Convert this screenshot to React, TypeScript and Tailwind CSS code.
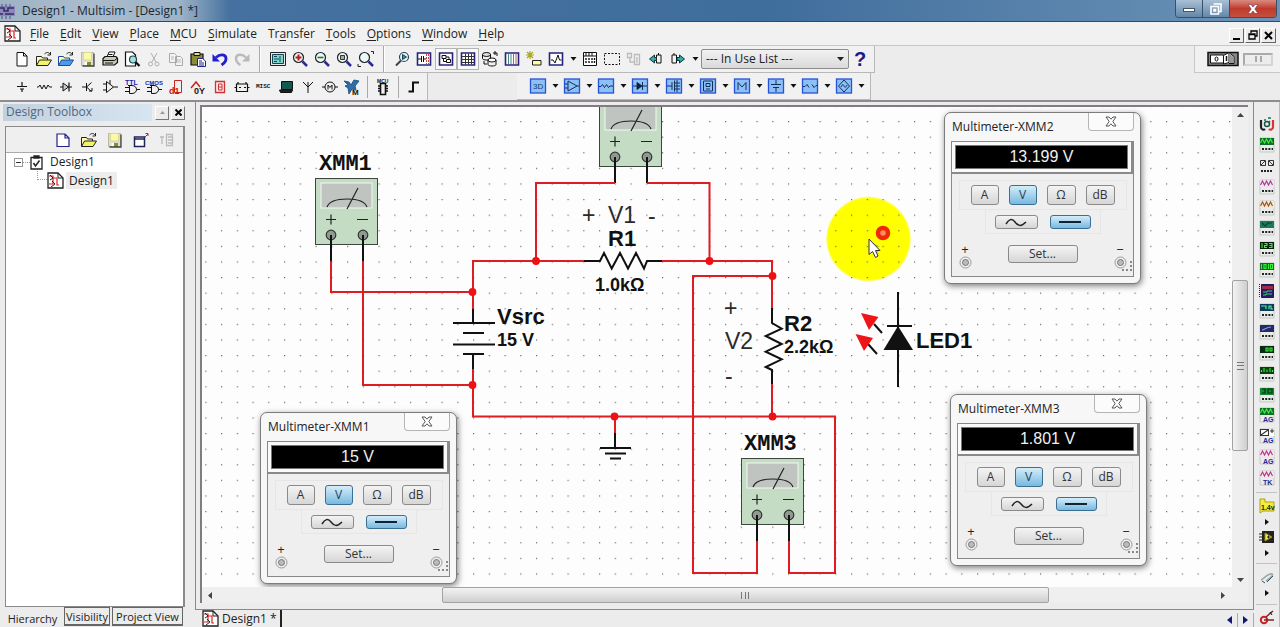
import React from "react";

type Kids = { children?: React.ReactNode };

/* ---------- shared pieces ---------- */

function Glyph({ children, size = 18 }: Kids & { size?: number }) {
  return (
    <svg width={size} height={size} viewBox="0 0 18 18" fill="none" stroke="#111" strokeWidth="1" aria-hidden="true" className="shrink-0">
      {children}
    </svg>
  );
}

function ToolButton({ label, children, pressed }: Kids & { label: string; pressed?: boolean }) {
  return (
    <button
      type="button"
      aria-label={label}
      className={
        pressed
          ? "flex h-[22px] w-[22px] shrink-0 items-center justify-center border border-[#b4b4b4] bg-[#f8f8f8]"
          : "flex h-[22px] w-[22px] shrink-0 items-center justify-center"
      }
    >
      {children}
    </button>
  );
}

function Separator() {
  return <span className="mx-[6px] h-[26px] w-[2px] shrink-0 border-l border-[#a8a8a8] bg-white" />;
}

function Caret({ label }: { label: string }) {
  return (
    <button type="button" aria-label={label} className="flex h-[22px] w-[12px] shrink-0 items-center justify-center">
      <svg width="7" height="4" viewBox="0 0 7 4" aria-hidden="true">
        <path d="M0.500 0h6L3.500 3.800z" fill="#111" />
      </svg>
    </button>
  );
}

function SheetIcon() {
  return (
    <svg width="17" height="17" viewBox="0 0 17 17" fill="none" aria-hidden="true" className="shrink-0">
      <path d="M1 1h10l5 5v10H1z" fill="#fff" stroke="#222" strokeWidth="1.300" />
      <path d="M11 1v5h5" stroke="#222" />
      <path d="M2 4h4v8H2M6 6h4v7h2" stroke="#d22" strokeWidth="1.200" />
      <path d="M3 3l3 3-3 2M4 15l4-3-3-3" stroke="#222" />
    </svg>
  );
}

/* ---------- standard toolbar drawings ---------- */

const pageShape = <path d="M4 2.500h6.500l3.500 3.500v10H4zM10.500 2.500V6H14" fill="#fff" stroke="#111" />;

function FolderGlyph({ fill, line }: { fill: string; line: string }) {
  return (
    <Glyph>
      <path d="M1.500 15.500v-9h5l1 1.500h5v2" fill="#ffffb0" stroke={line} />
      <path d="M1.500 15.500L4.500 10h12l-3.500 5.500z" fill={fill} stroke={line} />
      <path d="M9.500 4c2-2 4-2 5.500 0M15.500 2v3h-3" stroke="#222" />
    </Glyph>
  );
}

function SaveGlyph() {
  return (
    <Glyph>
      <path d="M2.500 2.500h12v13h-12z" fill="#deded0" stroke="#b8b8a8" />
      <path d="M4.500 2.500h8v7.500h-8z" fill="#fafaa8" stroke="#d8d890" />
      <path d="M5.500 12h2.500v3.500H5.500z" fill="#fff" stroke="none" />
      <path d="M8 12h4v4H8z" fill="#8a8a30" stroke="none" />
      <path d="M15 3.500v12.500H3.500" stroke="#444" strokeWidth="1.300" />
    </Glyph>
  );
}

function Lens({ children }: Kids) {
  return (
    <Glyph>
      <circle cx="7.500" cy="7.500" r="5" fill="#eafafa" stroke="#222" strokeWidth="1.200" />
      <path d="M11.500 11.500l4.500 4.500" stroke="#2a2a90" strokeWidth="2.500" />
      {children}
    </Glyph>
  );
}

const fileTools: [string, React.ReactNode][] = [
  ["New", <Glyph key="g">{pageShape}</Glyph>],
  ["Open", <FolderGlyph key="g" fill="#f5f36a" line="#222" />],
  ["Open samples", <FolderGlyph key="g" fill="#4a9bf0" line="#1a4a9a" />],
  ["Save", <SaveGlyph key="g" />],
  [
    "Print",
    <Glyph key="g">
      <path d="M6 7l2-5h6l-2 5" fill="#fff" />
      <path d="M2 8.500l2-2h11l1.500 2v4l-3 2.500H2z" fill="#c9c9b0" strokeWidth="1.200" />
      <path d="M2 10.500h11.500l3-2.500M4 13h8M7.500 4.500h4" />
    </Glyph>,
  ],
  [
    "Print preview",
    <Glyph key="g">
      <path d="M2.500 2h7l3 3v11h-10z" fill="#fff" strokeWidth="1.200" />
      <circle cx="10" cy="9.500" r="3.500" fill="#9fe0e0" stroke="#244" strokeWidth="1.200" />
      <path d="M12.500 12l4 4" strokeWidth="2.300" />
    </Glyph>,
  ],
  [
    "Cut",
    <Glyph key="g">
      <path d="M6 3l5 9M12 3l-5 9" stroke="#b0b0b0" />
      <circle cx="5.500" cy="14" r="2" stroke="#b0b0b0" />
      <circle cx="12" cy="14" r="2" stroke="#b0b0b0" />
    </Glyph>,
  ],
  [
    "Copy",
    <Glyph key="g">
      <path d="M2.500 3.500h5l2 2v7h-7zM8.500 6.500h5l2 2v7h-7z" fill="#f3f3f3" stroke="#aaa" />
      <path d="M4 7h3M4 9h3M10 10h4M10 12h4" stroke="#bbb" />
    </Glyph>,
  ],
  [
    "Paste",
    <Glyph key="g">
      <path d="M2 4h12v11H2z" fill="#8b8b3c" strokeWidth="1.200" />
      <path d="M5 2.500h6v3H5z" fill="#dcdc80" />
      <path d="M8.500 8.500h5l3 2.500v5.500h-8z" fill="#fff" stroke="#23238a" />
      <path d="M10 11h3M10 13h5M10 15h5" stroke="#23238a" />
    </Glyph>,
  ],
  [
    "Undo",
    <Glyph key="g">
      <path d="M5 7.500C9 3.500 15 4 15 8.500c0 3-2 5-4.500 6.500" stroke="#2020d0" strokeWidth="2.800" />
      <path d="M1.500 4v7.500H9z" fill="#2020d0" stroke="none" />
    </Glyph>,
  ],
  [
    "Redo",
    <Glyph key="g">
      <path d="M13 7.500C9 3.500 3 4 3 8.500c0 3 2 5 4.500 6.500" stroke="#b9b9b9" strokeWidth="2.400" />
      <path d="M16.500 4v7.500H9z" fill="#b9b9b9" stroke="none" />
    </Glyph>,
  ],
];

const zoomTools: [string, React.ReactNode][] = [
  [
    "Full screen",
    <Glyph key="g">
      <path d="M1.500 2.500h15v13h-15z" fill="#e8e8e8" stroke="#222" />
      <path d="M3.500 4.500h11v9h-11z" fill="#7fd6c8" stroke="#145" />
      <path d="M5 6.500h3M5 9h5M5 11.500h3M11 6v6" stroke="#145" />
    </Glyph>,
  ],
  ["Zoom in", <Lens key="g"><path d="M4.500 7.500h6M7.500 4.500v6" stroke="#c01818" strokeWidth="2" /></Lens>],
  ["Zoom out", <Lens key="g"><path d="M4.500 7.500h6" stroke="#188018" strokeWidth="1.600" /></Lens>],
  ["Zoom area", <Lens key="g"><path d="M5.500 5.500h4v4h-4z" fill="#aaa" stroke="#333" /></Lens>],
  ["Zoom fit", <Lens key="g"><path d="M1 14v2.500h3M14 1.500h2.500V4" stroke="#222" /></Lens>],
];

const navyFrame = <path d="M2.500 3h13v12h-13z" fill="#fff" stroke="#24247c" strokeWidth="1.600" />;

const viewTools: [string, React.ReactNode, boolean?][] = [
  [
    "Find",
    <Glyph key="g">
      <circle cx="11" cy="7" r="4.500" fill="#e8f4f8" stroke="#345" strokeWidth="1.200" />
      <path d="M8 10.500L3 15.500" stroke="#345" strokeWidth="2" />
      <path d="M9.500 4.500l4 2.500-4 2.500z" fill="#3a9a9a" stroke="#145" />
    </Glyph>,
  ],
  [
    "Toggle spreadsheet",
    <Glyph key="g">
      {navyFrame}
      <path d="M3 9h3M6.500 6v6M8.500 6v6M9 9h2" />
      <path d="M11.500 4v10M13.500 4v10" stroke="#c44" strokeDasharray="2 1" />
    </Glyph>,
  ],
  [
    "Toggle hierarchy",
    <Glyph key="g">
      {navyFrame}
      <path d="M5 5.500h4v3H5zM9.500 9.500h4v3h-4zM6.500 8.500v3h3M9 7h3v2.500" />
    </Glyph>,
    true,
  ],
  [
    "Toggle grid",
    <Glyph key="g">
      {navyFrame}
      <path d="M3 6.500h12M3 9.500h12M3 12.500h12M6.500 3.500v11M9.500 3.500v11M12.500 3.500v11" stroke="#333" />
    </Glyph>,
    true,
  ],
  [
    "Database manager",
    <Glyph key="g">
      <ellipse cx="5.500" cy="4.500" rx="4" ry="2" fill="#ddd" />
      <path d="M1.500 4.500v4c0 2 8 2 8 0v-4" />
      <ellipse cx="11" cy="10" rx="4" ry="2" fill="#fff" />
      <path d="M7 10v4.500c0 2 8 2 8 0V10M12 3h4v3M14 1v4M3 11v3h3" />
    </Glyph>,
  ],
  [
    "Component columns",
    <Glyph key="g">
      {navyFrame}
      <path d="M5.500 4v10M8 4v10" stroke="#488" />
      <path d="M10.500 4v10M13 4v10" stroke="#a66" />
    </Glyph>,
  ],
  [
    "Create component",
    <Glyph key="g">
      <path d="M5 1v8M1 5h8M2 2l6 6M8 2L2 8" stroke="#a8a820" strokeWidth="1.200" />
      <path d="M7.500 10.500h8.500v4.500H7.500z" fill="#ffffa0" stroke="#222" />
    </Glyph>,
  ],
  [
    "Grapher",
    <Glyph key="g">
      {navyFrame}
      <path d="M4 10h2l2 3 3-8 1.500 5h2" stroke="#111" />
    </Glyph>,
  ],
];

const reportTools: [string, React.ReactNode][] = [
  [
    "Electrical rules check",
    <Glyph key="g">
      <path d="M2.500 2.500h13v13h-13z" fill="#fff" />
      <path d="M2.500 6h13M5 3v3M8 3v3M11 3v3" />
      <path d="M5 8v6M8 8v6M11 8v6M13.500 8v6" strokeWidth="1.400" strokeDasharray="2 1" />
    </Glyph>,
  ],
  ["Capture area", <Glyph key="g"><path d="M1.500 3.500h15v11h-15z" strokeDasharray="2 1.500" /></Glyph>],
  [
    "Parent sheet",
    <Glyph key="g">
      <path d="M2.500 3.500h4v4h-4zM9.500 4.500h5v10h-5zM5 8v4h4M12 7v6" stroke="#bbb" strokeWidth="1.300" />
    </Glyph>,
  ],
  [
    "Back annotate",
    <Glyph key="g">
      <path d="M2.500 9l5-4v2.500h2v3h-2V13z" fill="#3aa" stroke="#133" />
      <path d="M9.500 5h4.500v8H9.500M11.500 3v2M9.500 5v2.500M9.500 10.500V13" />
    </Glyph>,
  ],
  [
    "Forward annotate",
    <Glyph key="g">
      <path d="M3 5h4.500v8H3zM5 3v2" />
      <path d="M15.500 9l-5-4v2.500H8v3h2.500V13z" fill="#3aa" stroke="#133" />
    </Glyph>,
  ],
];

/* ---------- component toolbar drawings ---------- */

const iconText = { fontFamily: "Liberation Sans, sans-serif", stroke: "none", fontWeight: 700 } as const;
const gateShape = <path d="M5 7.500h4c6 0 6 8 0 8H6.500V7.500M2 9.500h4M2 13.500h4M13.500 11.500H17" />;

const componentTools: [string, React.ReactNode][] = [
  ["Source", <Glyph key="g"><path d="M9 4v4M4 8.500h10M7 11h4M9 11v3" strokeWidth="1.200" /></Glyph>],
  ["Basic", <Glyph key="g"><path d="M2 9h1.500l1.500-2 2 4 2-4 2 4 2-4 1.500 2H17" /></Glyph>],
  ["Diode", <Glyph key="g"><path d="M3 9h12M12 4.500v9" strokeWidth="1.200" /><path d="M6 5l5.500 4L6 13z" fill="#ccc" /></Glyph>],
  ["Transistor", <Glyph key="g"><path d="M3 9h4M7.500 5v8M7.500 9l5-4.500M7.500 9l5 4.500M10 13h3v-3" /></Glyph>],
  ["Analog", <Glyph key="g"><path d="M5.500 3.500v11l7-5.500zM2 6h3.500M2 12h3.500M12.500 9H17M9 2v4" /></Glyph>],
  ["TTL", <Glyph key="g">{gateShape}<text x="2" y="7" fontSize="7" fill="#2222b0" {...iconText}>TTL</text></Glyph>],
  ["CMOS", <Glyph key="g">{gateShape}<text x="0" y="7" fontSize="6" fill="#2222b0" {...iconText}>CMOS</text></Glyph>],
  ["Miscellaneous digital", <Glyph key="g"><path d="M7.500 2.500h7v12h-7z" stroke="#c22" /><text x="2" y="16" fontSize="9" fill="#d01010" {...iconText}>d1</text></Glyph>],
  ["Mixed", <Glyph key="g"><path d="M2 10l5-6 4 5" stroke="#c22" strokeWidth="1.500" /><text x="5" y="16" fontSize="9" fill="#301010" {...iconText}>0Y</text></Glyph>],
  ["Indicator", <Glyph key="g"><path d="M4.500 3.500h9v11h-9z" fill="#fbe8e8" stroke="#c33" strokeWidth="1.300" /><path d="M7.500 6h3.500v6H7.500zM7.500 9h3.500" stroke="#c33" /></Glyph>],
  ["Power", <Glyph key="g"><path d="M3.500 6h11v7.500h-11zM5 4v2M13 4v2M1.500 9.500h2M14.500 9.500h2M6 9.500h2M11 9.500h2" strokeWidth="1.200" /></Glyph>],
  ["Misc", <Glyph key="g"><text x="1" y="10" fontSize="6" fill="#111" {...iconText} fontFamily="Liberation Mono, monospace">MISC</text></Glyph>],
  ["Advanced peripherals", <Glyph key="g"><path d="M4.500 3.500h11v8h-11z" fill="#125a50" stroke="#111" /><path d="M2.500 12h13l-1 2.500H3.500z" fill="#222" /></Glyph>],
  ["RF", <Glyph key="g"><path d="M9 15V4M4 4l5 5 5-5" /></Glyph>],
  ["Electromechanical", <Glyph key="g"><circle cx="9" cy="9" r="5" /><path d="M1 9h3M14 9h3M7 11.500V7l2 2.500L11 7v4.500" /></Glyph>],
  [
    "NI component",
    <Glyph key="g">
      <path d="M1 3l5 1 2 3 3-5 5 1-4 5 1 4-4-1-3 5-1-6-3-2 3-1z" fill="#2d6fa8" stroke="#1f5a90" />
      <text x="9" y="17" fontSize="8" fill="#111" {...iconText}>M</text>
    </Glyph>,
  ],
];

const virtualTools: [string, React.ReactNode][] = [
  ["3D", <text key="g" x="4" y="12" fontSize="8" fill="#123a6a" {...iconText} fontWeight={400}>3D</text>],
  ["Analog family", <path key="g" d="M5 4v10l9-5zM2 7h3M2 11h3M14 9h2" />],
  ["Basic family", <path key="g" d="M2 9.500h2l1.500-2 2 3 2-3 2 3 1.500-1.500h3" />],
  ["Diode family", <path key="g" d="M2 9h14M6 5.500v7l5-3.500zM11.500 5v8" fill="#111" />],
  ["Transistor family", <path key="g" d="M2 9h5M7 5v8M9.500 3.500v11M9.500 6H15M9.500 9H15M9.500 12H15M12 3v12" />],
  ["Measurement family", <path key="g" d="M4.500 4h9v10h-9zM7 6.500h4v3H7zM7 12h4" />],
  ["Misc family", <path key="g" d="M5 13V5.500L9 10l4-4.500V13" />],
  ["Power family", <path key="g" d="M9 3v4M4 7.500h10M6 10.500h6M9 10.500V15" />],
  ["Rated family", <path key="g" d="M2 9.500h2l2-2 2 3M11 7.500l2 3 2-2h1.500" />],
  ["Signal family", <path key="g" d="M9 3l5.500 6L9 15 3.500 9zM6 10c1.500-3.500 2.500-2.500 3-1s2 2 3-1" />],
];

/* ---------- instrument bar drawings ---------- */

function Instr({ top, trace, stroke = "#3df03d", base = "dots", label }: { top: string; trace: string; stroke?: string; base?: "dots" | "text"; label?: string }) {
  return (
    <svg width="16" height="16" viewBox="0 0 16 16" fill="none" aria-hidden="true">
      <path d="M1 1h14v14H1z" fill="#e9ece9" stroke="#c3c9c3" />
      <path d="M1 1h14v7H1z" fill={top} />
      <path d={trace} stroke={stroke} strokeWidth="1.100" />
      {base === "dots" ? (
        <path d="M3 12h11" stroke="#222" strokeWidth="2" strokeDasharray="2 1.200" />
      ) : (
        <text x="4" y="15" fontSize="7" fill="#1a2a9a" {...iconText}>{label}</text>
      )}
    </svg>
  );
}

const zig = "M1.500 6l2-4 2 4 2-4 2 4 2-4 2 4";

const instruments: [string, React.ReactNode][] = [
  [
    "Multimeter",
    <svg key="g" width="16" height="16" viewBox="0 0 16 16" fill="none" aria-hidden="true">
      <path d="M2 4v7c0 3 3 3 4 2" stroke="#222" strokeWidth="2.200" />
      <path d="M14 4v7c0 3-3 3-4 2" stroke="#d33" strokeWidth="2.200" />
      <circle cx="8" cy="8" r="2.500" stroke="#1d5a4a" strokeWidth="1.500" />
      <path d="M5 4h2M9 2h3M11 5l-2 2" stroke="#1d6a5a" strokeWidth="1.500" />
    </svg>,
  ],
  ["Function generator", <Instr key="g" top="#146a2c" trace={zig} />],
  [
    "Wattmeter",
    <svg key="g" width="16" height="16" viewBox="0 0 16 16" fill="none" aria-hidden="true">
      <path d="M1.500 2.500h5v5h-5zM9.500 2.500h5v5h-5zM2 7l4-4M10 3l4 4" stroke="#333" />
      <path d="M2 13h12" stroke="#222" strokeWidth="2" strokeDasharray="2 1" />
    </svg>,
  ],
  ["Oscilloscope", <Instr key="g" top="#f0e4f0" trace={zig} stroke="#a03a8a" />],
  ["Four channel oscilloscope", <Instr key="g" top="#f0ead0" trace={zig} stroke="#9a4a20" />],
  ["Bode plotter", <Instr key="g" top="#1c7a5c" trace="M3 3l3 3 3-3h4" stroke="#042" />],
  ["Frequency counter", <Instr key="g" top="#04220c" trace="M3 2v5M5.500 2.500h2.500v2H5.500v2h2.500M10 2.500h3v4h-3M10.500 4.500h2.500" />],
  ["Word generator", <Instr key="g" top="#0d6a20" trace="M2.500 2v5M5 2.500h2v4H5zM9.500 2v5M11.500 2.500h2v4h-2z" />],
  [
    "Logic analyzer",
    <svg key="g" width="16" height="16" viewBox="0 0 16 16" fill="none" aria-hidden="true">
      <path d="M2.500 1.500h12v13h-12z" fill="#2a1a6a" stroke="#1a1a5a" />
      <path d="M3 3h11v3H3z" fill="#a02a4a" />
      <path d="M4 9h4v-1h5M4 12h3v-1h6" stroke="#3dd05d" />
      <path d="M0.500 1v14" stroke="#222" strokeDasharray="1 1" />
    </svg>,
  ],
  ["Logic converter", <Instr key="g" top="#0d3a5a" trace="M2 3h5v3M10 6V3h2v3h2" stroke="#5df0a0" />],
  ["IV analyzer", <Instr key="g" top="#232a6a" trace="M3 6c3 0 4-3 9-3" stroke="#889ad0" />],
  ["Distortion analyzer", <Instr key="g" top="#082a10" trace="M7 3h2v3H7zM11 3h2v3h-2z" />],
  ["Spectrum analyzer", <Instr key="g" top="#06400f" trace="M2.500 6V4M5 6V2M8 6V3.500M11 6V2M13.500 6V4" />],
  ["Network analyzer", <Instr key="g" top="#148a34" trace="M3 2h3v4H3M9 2h4v4H9z" stroke="#043010" />],
  ["Agilent function generator", <Instr key="g" top="#146a2c" trace={zig} base="text" label="AG" />],
  ["Agilent multimeter", <Instr key="g" top="#fff" trace="M1.500 1.500h8v6h-8zM2 7l7-5M11 3h4M13 1v4" stroke="#333" base="text" label="AG" />],
  ["Agilent oscilloscope", <Instr key="g" top="#f0e4f0" trace={zig} stroke="#b03a7a" base="text" label="AG" />],
  ["Tektronix oscilloscope", <Instr key="g" top="#f0e4f0" trace={zig} stroke="#b03a7a" base="text" label="TK" />],
];

function InstrumentBar() {
  const arrow = (label: string) => (
    <button type="button" aria-label={label} className="flex h-[14px] w-4 items-center justify-center">
      <svg width="4" height="6" viewBox="0 0 4 6" aria-hidden="true"><path d="M0 0l4 3-4 3z" fill="#111" /></svg>
    </button>
  );
  const rule = <span className="my-[4px] h-px w-[21px] bg-[#c2c2c2]" />;
  return (
    <aside className="flex w-[26px] shrink-0 flex-col items-center overflow-hidden border-r border-[#bbb] pt-[12px]">
      <div className="flex h-[374px] shrink-0 flex-col">
        {instruments.map(([name, art]) => (
          <button key={name} type="button" aria-label={name} className="flex flex-1 items-center justify-center">{art}</button>
        ))}
      </div>
      {rule}
      <button type="button" aria-label="Measurement probe" className="flex h-[20px] items-center">
        <svg width="16" height="16" viewBox="0 0 16 16" aria-hidden="true">
          <path d="M1 1h5v3h9v9H4l-3 2z" fill="#f2ee3a" stroke="#a8a020" />
          <text x="2" y="12" fontSize="7" fill="#222" {...iconText}>1.4v</text>
        </svg>
      </button>
      {arrow("Probe options")}
      <button type="button" aria-label="LabVIEW instruments" className="flex h-[20px] items-center">
        <svg width="16" height="16" viewBox="0 0 16 16" fill="none" aria-hidden="true">
          <path d="M3 2h12v12H3z" fill="#222" />
          <path d="M6 4v8l7-4z" fill="#f0ee50" stroke="#8a8a20" />
          <path d="M0 5h3M0 8h3M0 11h3M8 8h3M9.500 6.500v3" stroke="#222" />
        </svg>
      </button>
      {arrow("LabVIEW options")}
      {rule}
      <button type="button" aria-label="Current probe" className="flex h-[20px] items-center">
        <svg width="16" height="16" viewBox="0 0 16 16" fill="none" aria-hidden="true">
          <path d="M2 10c3-1 7-7 11-6 2 1-3 5-6 7" stroke="#9aa" strokeWidth="1.600" />
          <path d="M3 11l3 2M8 12l6-6" stroke="#356" />
        </svg>
      </button>
      {arrow("Current probe options")}
      {rule}
      <button type="button" aria-label="Static probe" className="flex h-[20px] items-center">
        <svg width="16" height="16" viewBox="0 0 16 16" fill="none" aria-hidden="true">
          <circle cx="5" cy="10" r="3.200" stroke="#c22" strokeWidth="2" />
          <path d="M5 10h10M7 7l7-6" stroke="#822" strokeWidth="1.500" />
          <path d="M11 2l2 3" stroke="#111" />
        </svg>
      </button>
    </aside>
  );
}

/* ---------- schematic ---------- */

function MeterSymbol({ x, y }: { x: number; y: number }) {
  return (
    <g transform={`translate(${x} ${y})`}>
      <rect x="0.500" y="0.500" width="62" height="66" fill="#c3dcc3" stroke="#3c463c" />
      <rect x="6" y="5" width="51" height="25" fill="#c0c4c0" stroke="#f4f8f4" />
      <path d="M12 29q3-8 20-8t20 8M32 31L43 10" fill="none" stroke="#222" strokeWidth="1.200" />
      <path d="M11 41.500h10M16 36.500v10M42 41.500h11" stroke="#222" strokeWidth="1.200" />
      <circle cx="16" cy="57" r="4.800" fill="#8f9a8f" stroke="#333" strokeWidth="1.200" />
      <circle cx="48" cy="57" r="4.800" fill="#8f9a8f" stroke="#333" strokeWidth="1.200" />
      <path d="M16 57v26M48 57v26" stroke="#111" strokeWidth="2" />
    </g>
  );
}

const nodes: [number, number][] = [[472.500, 292], [536, 261], [709.500, 261], [772.500, 276], [472.500, 385], [614.500, 416.500], [772.500, 416.500]];

function Schematic() {
  return (
    <svg width="100%" height="100%" className="absolute inset-0" role="img" aria-label="Circuit schematic">
      <defs>
        <pattern id="grid-dots" x="113.500" y="14" width="15.750" height="15.600" patternUnits="userSpaceOnUse">
          <rect x="0" y="0" width="1.200" height="1.200" fill="#6a6a6a" />
        </pattern>
        <radialGradient id="halo">
          <stop offset="0.950" stopColor="#ffff00" />
          <stop offset="1" stopColor="#ffff00" stopOpacity="0.300" />
        </radialGradient>
      </defs>
      <g transform="translate(-202 -107)" fill="none">
        <circle cx="868.500" cy="239" r="42.500" fill="url(#halo)" />
      </g>
      <rect width="100%" height="100%" fill="url(#grid-dots)" />
      <g transform="translate(-202 -107)" fill="none">
        <MeterSymbol x={315} y={178} />
        <MeterSymbol x={599} y={100} />
        <MeterSymbol x={741} y={458} />
        <g stroke="#de1c24" strokeWidth="2">
          <path d="M331 261v31h141.500M363 261v124h109.500" />
          <path d="M584 261H473v48M473 369v47.500h362V573h-46v-32" />
          <path d="M536 261v-78h79M647 183h62.500v78M662 261h110v47M772 276h-79v297h64v-32M772 384v32M615 416v18" />
        </g>
        <g stroke="#111" strokeWidth="2">
          <path d="M473 309v14M453 323h42M463 333h21M453 344.500h42M463 354h21M473 354v15" />
          <path d="M584 261h16l4-8 7.700 15.500L620 253l8 15.500 8-15.500 8 15.500 3-7.500h15" />
          <path d="M772 308v15l9.700 5.700-16 7.300 16 8-16 7.700 16 7.600-16 7.700 6.300 3v14" />
          <path d="M615 433v15M600 448h31M605 453.500h21M610 458.500h11" />
          <path d="M898 292v95M887 326h25" />
          <path d="M874 324l8 9M868 344l9 10" />
        </g>
        <path d="M898 326l-14.500 24H913z" fill="#111" />
        <path d="M861 313l17.500 4-9.500 13zM855.500 334l17.500 4-9 13z" fill="#ee1418" />
        {nodes.map(([cx, cy]) => (
          <circle key={`${cx}-${cy}`} cx={cx} cy={cy} r="3.900" fill="#ee1014" />
        ))}
        <circle cx="883" cy="233" r="5" fill="#ff9060" stroke="#f02808" strokeWidth="4.500" />
        <path d="M870 241l9 14 -3-8h4z" fill="#555" opacity="0.400" />
        <path d="M869 239v15.500l3.500-3 3 6 2.500-1.500-2.500-5.500h4.500z" fill="#fff" stroke="#333" />
        <g fill="#111" stroke="none" fontFamily="'Liberation Sans', Arial, sans-serif">
          <g fontSize="22" fontWeight="700">
            <text x="608" y="246">R1</text>
            <text x="497" y="324">Vsrc</text>
            <text x="784" y="331">R2</text>
            <text x="916" y="348">LED1</text>
            <g fontFamily="'Liberation Mono', 'Courier New', monospace">
              <text x="319" y="170">XMM1</text>
              <text x="744" y="450">XMM3</text>
            </g>
          </g>
          <g fontSize="18" fontWeight="700">
            <text x="595" y="291">1.0kΩ</text>
            <text x="497" y="346">15 V</text>
            <text x="784" y="353">2.2kΩ</text>
          </g>
          <g fontSize="23" fill="#2a2a2a">
            <text x="608" y="223">V1</text>
            <text x="725" y="349">V2</text>
            <text x="582" y="223">+</text>
            <text x="648" y="224">-</text>
            <text x="724" y="316">+</text>
            <text x="725" y="384">-</text>
          </g>
        </g>
      </g>
    </svg>
  );
}

/* ---------- multimeter window ---------- */

function Terminal({ sign }: { sign: string }) {
  return (
    <div className="flex w-[14px] flex-col items-center text-[13px] leading-[14px] text-[#222]">
      <span>{sign}</span>
      <svg width="13" height="13" viewBox="0 0 13 13" fill="none" aria-hidden="true">
        <circle cx="6.500" cy="6.500" r="5.500" stroke="#9a9a9a" />
        <circle cx="6.500" cy="6.500" r="3" fill="#bbb" stroke="#777" />
      </svg>
    </div>
  );
}

const plainKey = "flex items-center justify-center rounded-[3px] border border-[#8a8a8a] bg-gradient-to-b from-[#f4f4f4] to-[#d6d6d6] text-[#333]";
const activeKey = "flex items-center justify-center rounded-[3px] border border-[#3c6f92] bg-gradient-to-b from-[#d5edf9] to-[#76b9e0] text-[#1f3f55]";

function Multimeter({ name, value, place }: { name: string; value: string; place: string }) {
  return (
    <section aria-label={name} className={`absolute w-[197px] rounded-[7px] border border-[#7c7c7c] bg-[#f7f7f7] px-[6px] pb-[6px] shadow-[1px_2px_6px_rgba(0,0,0,0.5)] ${place}`}>
      <header className="flex h-[28px] items-start justify-between">
        <h2 className="pt-[5px] pl-px text-[12px] leading-[18px] text-[#222]">{name}</h2>
        <button type="button" aria-label="Close" className="flex h-[18px] w-[46px] items-center justify-center rounded-b-[4px] border border-t-0 border-[#b5b5b5] bg-[#fbfbfb]">
          <svg width="12" height="11" viewBox="0 0 12 11" fill="#fff" stroke="#555" aria-hidden="true">
            <path d="M1 1h3l2 2.200L8 1h3L7.800 5.500 11 10H8L6 7.800 4 10H1l3.200-4.500z" />
          </svg>
        </button>
      </header>
      <div className="flex h-[136px] flex-col items-center border border-[#888] bg-[#efefef]">
        <div className="w-full border-r-2 border-b-2 border-[#8a8a8a] bg-[#fafafa] p-[3px]">
          <output className="flex h-[24px] items-center justify-center border border-[#777] bg-black text-[16px] text-[#f0f0f0] [font-family:'Liberation_Sans',Arial,sans-serif]">{value}</output>
        </div>
        <div className="mt-[6px] flex w-[168px] justify-center gap-[10px] border border-[#e6e6e6] py-[4px] text-[12px]">
          <button type="button" className={`h-[20px] w-[28px] ${plainKey}`}>A</button>
          <button type="button" aria-pressed="true" className={`h-[20px] w-[28px] ${activeKey}`}>V</button>
          <button type="button" className={`h-[20px] w-[29px] ${plainKey}`}>Ω</button>
          <button type="button" className={`h-[20px] w-[29px] ${plainKey}`}>dB</button>
        </div>
        <div className="flex gap-[12px] border border-t-0 border-[#e6e6e6] px-[9px] pt-[5px] pb-[4px]">
          <button type="button" aria-label="AC" className={`h-[14px] w-[43px] ${plainKey}`}>
            <svg width="22" height="9" viewBox="0 0 22 9" fill="none" stroke="#222" strokeWidth="1.500" aria-hidden="true">
              <path d="M1 6c3-5 6-6 9-2s6 5 11 0" />
            </svg>
          </button>
          <button type="button" aria-label="DC" aria-pressed="true" className={`h-[14px] w-[41px] ${activeKey}`}>
            <span className="h-[2px] w-[22px] bg-[#123]" />
          </button>
        </div>
        <div className="relative flex w-full items-start justify-between px-[6px] pt-[8px]">
          <Terminal sign="+" />
          <button type="button" className={`mt-[3px] h-[18px] w-[70px] text-[12px] ${plainKey}`}>Set...</button>
          <Terminal sign="−" />
          <svg width="12" height="12" viewBox="0 0 12 12" className="absolute right-0 -bottom-[3px]" fill="#888" aria-hidden="true">
            <path d="M9 1h2v2H9zM9 5h2v2H9zM9 9h2v2H9zM5 9h2v2H5zM1 9h2v2H1z" />
          </svg>
        </div>
      </div>
    </section>
  );
}

/* ---------- page sections ---------- */

const menus: [string, string, string][] = [
  ["", "F", "ile"], ["", "E", "dit"], ["", "V", "iew"], ["", "P", "lace"], ["", "M", "CU"], ["", "S", "imulate"],
  ["Tr", "a", "nsfer"], ["", "T", "ools"], ["", "O", "ptions"], ["", "W", "indow"], ["", "H", "elp"],
];

function TitleBar() {
  return (
    <header className="flex h-[22px] shrink-0 items-start justify-between border-b border-[#2d4a66] bg-[linear-gradient(90deg,#9fb3c6_0,#a9bccd_90px,#9db3c7_180px,#44719f_230px,#3f6d9c_60%,#6d94b8_100%)]">
      <div className="flex h-full items-center">
        <svg width="16" height="16" viewBox="0 0 16 16" fill="none" aria-hidden="true" className="mr-[6px]">
          <path d="M0 3h15v10H0z" fill="#8a8ab8" />
          <path d="M0 5h4v3h4V5h6M0 11h3M5 11h9" stroke="#3a2a6a" strokeWidth="1.500" />
          <path d="M2 1v3M6 1v3M10 1v3M2 13v3M6 13v3M10 13v3" stroke="#554a80" />
        </svg>
        <h1 className="text-[12px] text-[#1c2630]">Design1 - Multisim - [Design1 *]</h1>
      </div>
      <div className="mr-[3px] flex h-[18px] overflow-hidden rounded-b-[4px] border border-t-0 border-[#3a5068]">
        <button type="button" aria-label="Minimize" className="flex w-[27px] items-center justify-center border-r border-[#3a5068] bg-gradient-to-b from-[#a9c0d6] to-[#6387aa]">
          <span className="mt-[3px] h-[4px] w-[12px] border border-[#456] bg-white" />
        </button>
        <button type="button" aria-label="Restore" className="flex w-[27px] items-center justify-center border-r border-[#3a5068] bg-gradient-to-b from-[#a9c0d6] to-[#6387aa]">
          <svg width="12" height="12" viewBox="0 0 12 12" fill="none" stroke="#fff" strokeWidth="1.600" aria-hidden="true">
            <path d="M3.500 1h7.500v7.500H9M1 3.500h7.500V11H1zM4 6.500h1.500V8H4z" />
          </svg>
        </button>
        <button type="button" aria-label="Close window" className="flex w-[46px] items-center justify-center bg-gradient-to-b from-[#d98a80] via-[#c03a2c] to-[#c25040]">
          <svg width="12" height="10" viewBox="0 0 12 10" fill="#fff" stroke="#734" strokeWidth="0.600" aria-hidden="true">
            <path d="M1 0.500h3l2 2.500 2-2.500h3L7.800 5 11 9.500H8L6 7 4 9.500H1L4.200 5z" />
          </svg>
        </button>
      </div>
    </header>
  );
}

const mdiButton = "flex h-[15px] w-[15px] items-center justify-center border border-t-[#fff] border-l-[#fff] border-r-[#666] border-b-[#666] bg-[#ececec]";

function MenuBar() {
  return (
    <nav className="flex h-[24px] shrink-0 items-center border-b border-[#c8c8c8] bg-[#f1f1f1] pr-[4px] pl-[4px]">
      <SheetIcon />
      <ul className="ml-[9px] flex flex-1 gap-[11px] text-[12px] text-[#222]">
        {menus.map(([pre, key, post]) => (
          <li key={pre + key + post}>
            <button type="button">{pre}<span className="underline underline-offset-2">{key}</span>{post}</button>
          </li>
        ))}
      </ul>
      <div className="flex gap-px pt-[3px]">
        <button type="button" aria-label="Minimize sheet" className={mdiButton}>
          <span className="mt-[8px] h-[2px] w-[7px] bg-black" />
        </button>
        <button type="button" aria-label="Restore sheet" className={mdiButton}>
          <svg width="10" height="10" viewBox="0 0 10 10" fill="none" stroke="#000" strokeWidth="1.300" aria-hidden="true">
            <path d="M3 3V1h6v5H7M1 4h6v5H1zM1 4.500h6" />
          </svg>
        </button>
        <button type="button" aria-label="Close sheet" className={mdiButton}>
          <svg width="9" height="9" viewBox="0 0 9 9" stroke="#000" strokeWidth="2" aria-hidden="true"><path d="M1 1l7 7M8 1L1 8" /></svg>
        </button>
      </div>
    </nav>
  );
}

function StandardToolbar() {
  return (
    <div className="flex h-[27px] shrink-0 items-center justify-between">
      <div className="flex h-full items-center border-r border-b border-[#b8b8b8] bg-[#f1f1f1] pr-[3px] pl-[11px]">
        {fileTools.map(([n, g]) => <ToolButton key={n} label={n}>{g}</ToolButton>)}
        <Separator />
        {zoomTools.map(([n, g]) => <ToolButton key={n} label={n}>{g}</ToolButton>)}
        <Separator />
        {viewTools.map(([n, g, on]) => <ToolButton key={n} label={n} pressed={on}>{g}</ToolButton>)}
        <Caret label="Grapher options" />
        {reportTools.map(([n, g]) => <ToolButton key={n} label={n}>{g}</ToolButton>)}
        <Caret label="Annotation options" />
        <div className="relative flex items-center">
          <select aria-label="In use list" className="h-[20px] w-[148px] appearance-none rounded-[2px] border border-[#8c8c8c] bg-gradient-to-b from-[#f2f2f2] to-[#dadada] pl-[4px] text-[12px] leading-[18px] text-[#222]">
            <option>--- In Use List ---</option>
          </select>
          <svg width="7" height="4" viewBox="0 0 7 4" aria-hidden="true" className="pointer-events-none absolute right-[5px]">
            <path d="M0 0h7L3.500 4z" fill="#222" />
          </svg>
        </div>
        <button type="button" aria-label="Help" className="w-[22px] text-[20px] leading-[22px] font-bold text-[#1c1c8c] [font-family:'Liberation_Sans',sans-serif]">?</button>
      </div>
      <div className="flex h-full items-center gap-[4px] border-b border-l border-[#c8c8c8] bg-[#f1f1f1] pr-[7px] pl-[12px]">
        <button type="button" aria-label="Run simulation">
          <svg width="32" height="16" viewBox="0 0 32 16" fill="none" aria-hidden="true">
            <path d="M1 1.500h30v13H1z" fill="#888" stroke="#111" strokeWidth="1.500" />
            <path d="M3.500 4h13v8h-13z" fill="#fff" stroke="#111" />
            <path d="M16.500 4.500L22 1.500v10l-5.500 1.500zM22 1.500l5 4v7h-5" fill="#fff" stroke="#111" />
            <path d="M22.500 2.500l4 3.500v6h-4z" fill="#999" />
            <ellipse cx="9.500" cy="8" rx="1.500" ry="2" stroke="#111" />
            <path d="M19.500 5v5" stroke="#111" strokeWidth="1.500" />
          </svg>
        </button>
        <button type="button" aria-label="Pause simulation" className="flex h-[13px] w-[30px] items-center justify-center gap-[3px] border-2 border-t-[#aaa] border-l-[#aaa] border-r-[#d5d5d5] border-b-[#d5d5d5] bg-[#ececec]">
          <span className="h-[6px] w-[2px] bg-[#aaa]" />
          <span className="h-[6px] w-[2px] bg-[#aaa]" />
        </button>
      </div>
    </div>
  );
}

function ComponentToolbar() {
  return (
    <div className="flex h-[27px] shrink-0 items-center">
      <div className="flex h-full items-center border-r border-[#b8b8b8] bg-[#f1f1f1] pr-[2px] pl-[11px]">
        {componentTools.map(([n, g]) => <ToolButton key={n} label={n}>{g}</ToolButton>)}
        <span className="mx-[4px] h-[22px] w-px bg-[#a8a8a8]" />
        <ToolButton label="Microcontroller">
          <Glyph>
            <path d="M6.500 5.500h5v11h-5zM4 8h2M4 10.500h2M4 13h2M12 8h2M12 10.500h2M12 13h2" strokeWidth="1.600" />
            <text x="3" y="4.500" fontSize="5" fill="#111" {...iconText}>MCU</text>
          </Glyph>
        </ToolButton>
        <span className="mx-[4px] h-[22px] w-px bg-[#a8a8a8]" />
        <ToolButton label="Bus">
          <Glyph><path d="M3.500 13.500H8v-9h6" strokeWidth="2" /></Glyph>
        </ToolButton>
      </div>
      <div className="ml-[89px] flex h-full items-center border-r border-b border-[#b8b8b8] bg-[#f1f1f1] pr-[3px] pl-[10px]">
        {virtualTools.map(([n, g]) => (
          <div key={n} className="flex w-[34px] items-center">
            <ToolButton label={n}>
              <Glyph>
                <rect x="1.500" y="2" width="15" height="14" fill="#8dc0f8" stroke="#2552d8" strokeWidth="1.300" />
                <g stroke="#12305a">{g}</g>
              </Glyph>
            </ToolButton>
            <Caret label={`${n} options`} />
          </div>
        ))}
      </div>
    </div>
  );
}

const smallButton = "flex h-[14px] w-[14px] items-center justify-center border border-t-white border-l-white border-r-[#777] border-b-[#777] bg-[#ececec]";

function DesignToolbox() {
  return (
    <aside className="flex w-[195px] shrink-0 flex-col pt-[2px] pr-[10px] pl-[3px]">
      <div className="flex h-[17px] items-center">
        <h2 className="h-full flex-1 bg-gradient-to-r from-[#c3d1df] to-[#d7e5f1] pl-[3px] text-[12px] leading-[16px] text-[#51667c]">Design Toolbox</h2>
        <div className="flex gap-[2px] pl-[3px]">
          <button type="button" aria-label="Collapse" className={smallButton}>
            <svg width="5" height="3" viewBox="0 0 5 3" aria-hidden="true"><path d="M0 3h5L2.500 0z" fill="#999" /></svg>
          </button>
          <button type="button" aria-label="Close toolbox" className={smallButton}>
            <svg width="7" height="7" viewBox="0 0 7 7" stroke="#000" strokeWidth="2" aria-hidden="true"><path d="M0.500 0.500l6 6M6.500 0.500l-6 6" /></svg>
          </button>
        </div>
      </div>
      <div className="mt-[5px] ml-[2px] flex min-h-0 flex-1 flex-col border border-r-2 border-[#8a8a8a] bg-white">
        <div className="flex h-[26px] items-center gap-[4px] border-b border-[#aaa] bg-[#efefef] pl-[46px]">
          <ToolButton label="New design"><Glyph><path d="M3 3h8l4 4v8.500H3zM11 3v4h4" fill="#fff" stroke="#22228a" strokeWidth="1.200" /></Glyph></ToolButton>
          <ToolButton label="Open design"><FolderGlyph fill="#f5f36a" line="#222" /></ToolButton>
          <ToolButton label="Save design"><SaveGlyph /></ToolButton>
          <ToolButton label="Detach">
            <Glyph><path d="M2.500 6h10v9.500h-10zM2.500 8h10" fill="#fff" stroke="#22225a" strokeWidth="1.500" /><path d="M13 6l3-3M13.500 2.500H16V5" stroke="#c22" /></Glyph>
          </ToolButton>
          <ToolButton label="Rename">
            <Glyph><path d="M2 6h4M4 6v7M8.500 3.500h6v11h-6zM10 6h4M10 9h4M10 12h4" stroke="#bbb" strokeWidth="1.300" /></Glyph>
          </ToolButton>
        </div>
        <ul className="pl-[8px] text-[12px] text-[#222]">
          <li>
            <div className="flex h-[18px] items-center">
              <button type="button" aria-label="Collapse Design1" className="flex h-[9px] w-[9px] items-center justify-center border border-[#999] bg-white">
                <span className="h-px w-[5px] bg-[#333]" />
              </button>
              <span className="w-[7px] border-t border-dotted border-[#999]" />
              <svg width="13" height="15" viewBox="0 0 13 15" fill="none" stroke="#222" aria-hidden="true">
                <path d="M1 2.500h11v11.500H1zM4 1h5v2H4z" fill="#fff" strokeWidth="1.300" />
                <path d="M3.500 8l2 3 4-5.500" strokeWidth="1.500" />
              </svg>
              <span className="ml-[7px]">Design1</span>
            </div>
            <ul className="pl-[23px]">
              <li className="flex h-[18px] items-center">
                <span className="mb-[9px] h-[9px] w-[10px] border-b border-l border-dotted border-[#999]" />
                <SheetIcon />
                <span className="ml-[2px] bg-[#ededed] px-[3px] leading-[17px]">Design1</span>
              </li>
            </ul>
          </li>
        </ul>
      </div>
      <div role="tablist" className="flex h-[20px] shrink-0 items-start gap-[2px] text-[11px] leading-[17px] text-[#222]">
        <button type="button" role="tab" aria-selected="true" className="h-[20px] w-[59px] pt-[2px]">Hierarchy</button>
        <button type="button" role="tab" aria-selected="false" className="h-[19px] w-[46px] border border-b-2 border-[#666]">Visibility</button>
        <button type="button" role="tab" aria-selected="false" className="h-[19px] w-[71px] border border-b-2 border-[#666] whitespace-nowrap">Project View</button>
      </div>
    </aside>
  );
}

function ScrollArrow({ label, d }: { label: string; d: string }) {
  return (
    <button type="button" aria-label={label} className="flex h-[16px] w-[16px] shrink-0 items-center justify-center">
      <svg width="7" height="7" viewBox="0 0 7 7" aria-hidden="true"><path d={d} fill="#444" /></svg>
    </button>
  );
}

function Workspace() {
  return (
    <main className="flex min-w-0 flex-1 flex-col">
      <div className="flex min-h-0 flex-1 flex-col border border-t-0 border-[#8a8a8a] bg-[#ececec] pt-[3px] pr-[5px] pb-[6px] pl-[4px]">
        <div className="flex min-h-0 flex-1 flex-col border-t-2 border-l-2 border-[#807c82]">
          <div className="flex min-h-0 flex-1">
            <div className="relative min-w-0 flex-1 overflow-hidden bg-[#fdfdfd]">
              <Schematic />
              <Multimeter name="Multimeter-XMM2" value="13.199 V" place="top-[5px] left-[742px]" />
              <Multimeter name="Multimeter-XMM3" value="1.801 V" place="top-[287px] left-[748px]" />
              <Multimeter name="Multimeter-XMM1" value="15 V" place="top-[305px] left-[58px]" />
            </div>
            <div className="flex w-[16px] shrink-0 flex-col bg-[#efefef]">
              <ScrollArrow label="Scroll up" d="M0 5h7L3.500 1z" />
              <div className="flex-[157]" />
              <div className="flex flex-[169] items-center justify-center rounded-[2px] border border-[#a2a2a2] bg-gradient-to-r from-[#f3f3f3] to-[#cfcfcf]">
                <span className="h-[8px] w-[7px] border-y border-[#777] bg-[linear-gradient(#777,#777)] bg-[length:7px_1px] bg-center bg-no-repeat" />
              </div>
              <div className="flex-[120]" />
              <ScrollArrow label="Scroll down" d="M0 2h7L3.500 6z" />
            </div>
          </div>
          <div className="flex h-[16px] shrink-0 bg-[#efefef] pr-[18px]">
            <ScrollArrow label="Scroll left" d="M5 0v7L1 3.500z" />
            <div className="flex-[224]" />
            <div className="flex flex-[607] items-center justify-center rounded-[2px] border border-[#a2a2a2] bg-gradient-to-b from-[#f3f3f3] to-[#cfcfcf]">
              <span className="h-[7px] w-[8px] border-x border-[#777] bg-[linear-gradient(#777,#777)] bg-[length:1px_7px] bg-center bg-no-repeat" />
            </div>
            <div className="flex-[165]" />
            <ScrollArrow label="Scroll right" d="M2 0v7l4-3.500z" />
          </div>
        </div>
      </div>
      <div className="flex h-[17px] shrink-0 items-start justify-between">
        <button type="button" className="flex h-[17px] items-center gap-[3px] border-r-2 border-[#222] pr-[3px] pl-[7px] text-[12px] leading-[17px] text-[#222]">
          <SheetIcon />
          <span className="pt-px leading-[16px]">Design1 *</span>
        </button>
        <div className="flex pt-[3px]">
          <button type="button" aria-label="Previous sheet" className="flex h-[14px] w-[16px] items-center justify-center border-r border-[#aaa]">
            <svg width="5" height="8" viewBox="0 0 5 8" aria-hidden="true"><path d="M5 0v8L0 4z" fill="#14147a" /></svg>
          </button>
          <button type="button" aria-label="Next sheet" className="flex h-[14px] w-[16px] items-center justify-center border-r border-[#aaa]">
            <svg width="5" height="8" viewBox="0 0 5 8" aria-hidden="true"><path d="M0 0v8l5-4z" fill="#14147a" /></svg>
          </button>
        </div>
      </div>
    </main>
  );
}

export default function App() {
  return (
    <div className="flex h-screen flex-col overflow-hidden bg-[#ececec] [font-family:'Open_Sans','Noto_Sans',sans-serif]">
      <TitleBar />
      <MenuBar />
      <StandardToolbar />
      <ComponentToolbar />
      <div className="flex min-h-0 flex-1 border-t-2 border-[#8f8b90]">
        <DesignToolbox />
        <Workspace />
        <InstrumentBar />
      </div>
    </div>
  );
}
